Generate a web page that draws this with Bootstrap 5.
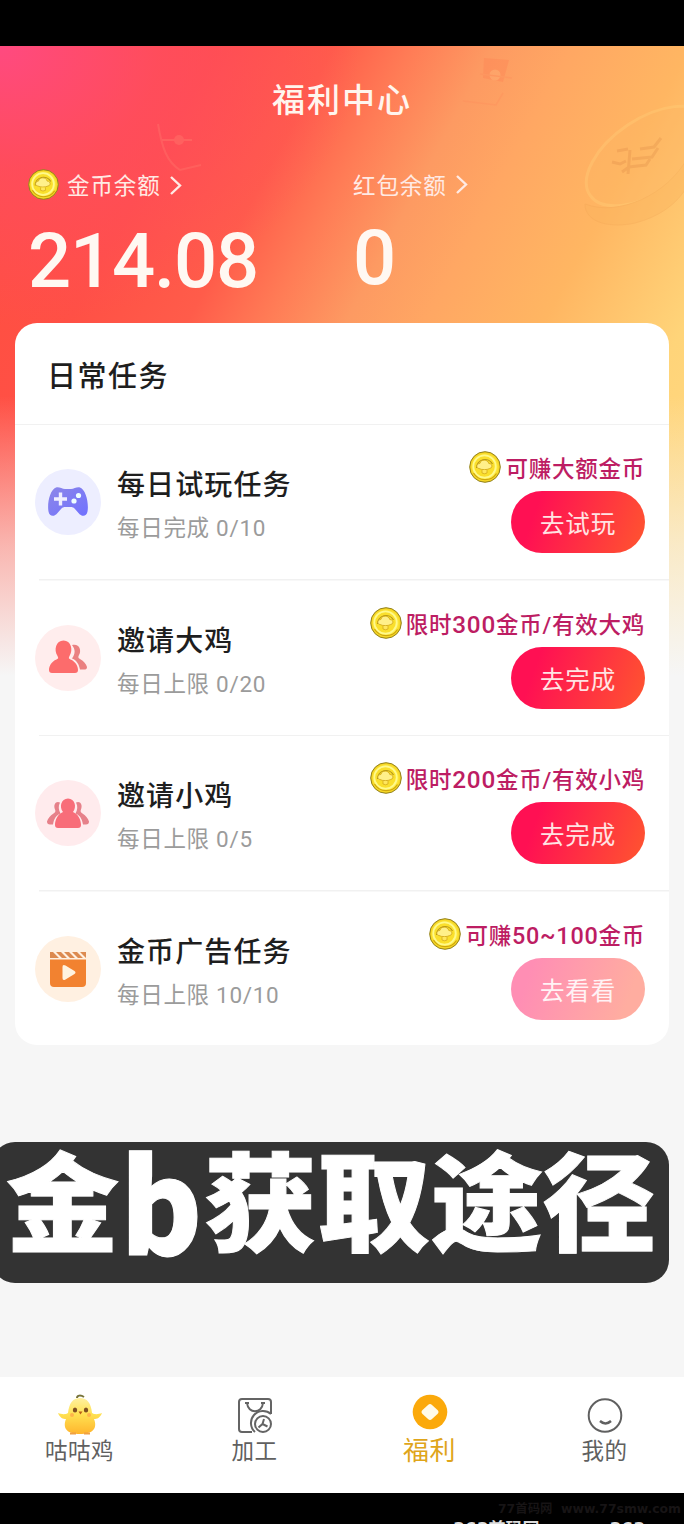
<!DOCTYPE html>
<html lang="zh-CN">
<head>
<meta charset="utf-8">
<meta name="viewport" content="width=device-width, initial-scale=1">
<title>福利中心</title>
<link href="https://cdn.jsdelivr.net/npm/bootstrap@5.3.0/dist/css/bootstrap.min.css" rel="stylesheet">
<style>
  body { font-family: Roboto, "Noto Sans CJK SC", sans-serif; background: #000; color: #1e1e1e; height: 1524px; overflow: hidden; }
  .status-strip { height: 46px; background: #000; }
  .screen { height: 1331px; background: linear-gradient(180deg, rgba(246,246,246,0) 350px, rgba(246,246,246,.6) 500px, #f6f6f6 630px), radial-gradient(ellipse 360px 280px at 0 0, #ff4a80, rgba(255,74,110,.55) 45%, rgba(255,76,80,0)), linear-gradient(118deg, #ff4e3e 0, #ff5045 190px, #ff5c4a 295px, #ff7c56 365px, #fd9a62 435px, #ffa763 505px, #ffb662 610px, #ffd479 735px, #ffdb87 912px) #f6f6f6; overflow: hidden; }
  .decor { left: 0; top: 0; pointer-events: none; }
  .page-title { height: 108px; font-size: 33px; letter-spacing: 2px; line-height: 110px; font-weight: 500; color: #fff5ee; }
  .balances { height: 169px; padding: 15px 0 0 28px; }
  .balance-label { height: 34px; line-height: 34px; font-size: 22.5px; letter-spacing: .9px; color: #ffeae4; }
  .balance-value { font-size: 76px; line-height: 80px; font-weight: 500; letter-spacing: -1.2px; color: #fff8f2; margin-top: 18px; }
  .balance-value.second { margin-top: 15px; }
  .first-balance { width: 325px; }
  .tasks { margin: 0 15px; border-radius: 22px; height: 722px; }
  .tasks-title { height: 102px; line-height: 108px; padding-left: 32px; font-size: 29px; letter-spacing: 1.5px; font-weight: 500; border-bottom: 1px solid #f1f1f1; }
  .task { height: 155.5px; padding: 0 24px 0 20px; }
  .task:not(:last-child) { background: linear-gradient(#f1f1f1, #f1f1f1) 24px 100% / 100% 1.5px no-repeat; }
  .task-icon { width: 66px; height: 66px; margin-top: 44px; }
  .task-text { margin: 40px 0 0 16px; }
  .task-name { font-size: 28px; letter-spacing: 1.1px; line-height: 42px; font-weight: 500; }
  .task-sub { font-size: 22.5px; letter-spacing: .7px; line-height: 30px; margin-top: 6px; color: #9b9b9b; }
  .task-side { padding-top: 25px; }
  .reward { height: 34px; line-height: 38px; font-size: 22.5px; letter-spacing: .75px; font-weight: 500; color: #bd1d63; white-space: nowrap; }
  .reward svg { margin-top: 1px; }
  .num { font-size: 24.3px; }
  .num.range { font-size: 23.4px; }
  .go-btn { width: 134px; height: 62px; border-radius: 31px; margin-top: 7px; font-size: 24.5px; letter-spacing: .8px; color: #ffe3e3; background: linear-gradient(110deg, #ff1053 20%, #ff5131 95%); line-height: 67px; padding: 0; border: 0; }
  .go-btn.done { background: linear-gradient(110deg, #ff8eb4 15%, #ffada0 85%); color: #fff3f5; }
  .caption-bar { margin: 97px 15px 0 -8px; height: 141px; border-radius: 23px; background: #333; color: #fff; padding-left: 14px; font: 900 113px/117px "Noto Sans CJK SC", sans-serif; white-space: nowrap; -webkit-text-stroke: 1px #fff; }
  .caption-text { transform: scaleY(.94); transform-origin: 0 0; }
  .tall { display: inline-block; width: 85px; text-align: center; transform: translateY(12px) scale(1.1, 1.23); transform-origin: 50% 86%; }
  .tabs-wrap { height: 116px; background: #fff; overflow: hidden; }
  .tabs { width: 700px; margin-left: -8px; font-size: 22.5px; color: #606060; }
  .tab { flex: 1 1 0; width: 0; padding-top: 16px; }
  .tab-label { line-height: 26px; margin-top: 3px; letter-spacing: .5px; }
  .tab.current { color: #dfa51b; font-size: 26px; }
  .footer-strip { height: 31px; background: #000; overflow: hidden; }
  .mark-line { height: 29px; padding-left: 498px; font: 600 12.4px/32px "DejaVu Sans", "Noto Sans CJK SC", sans-serif; color: #171415; white-space: nowrap; }
  .cut-line { font: 700 17px/26px "DejaVu Sans", "Noto Sans CJK SC", sans-serif; color: #ddd; padding-left: 453px; margin-top: -6px; gap: 70px; }
</style>
</head>
<body>
<svg width="0" height="0" class="position-absolute">
  <defs>
    <radialGradient id="gold"><stop offset="0" stop-color="#f5d93a"/><stop offset=".6" stop-color="#f4d51d"/><stop offset=".72" stop-color="#fff04b"/><stop offset="1" stop-color="#f3cc12"/></radialGradient>
    <linearGradient id="violet" x1="0" x2="1" y2="1"><stop stop-color="#8d87e8"/><stop offset="1" stop-color="#7071ff"/></linearGradient>
    <linearGradient id="chick" x2="0" y2="1"><stop stop-color="#fff0a0"/><stop offset=".45" stop-color="#ffe151"/><stop offset="1" stop-color="#ffb52d"/></linearGradient>
    <symbol id="coin" viewBox="0 0 32 32">
      <circle cx="16" cy="16" r="15.3" fill="url(#gold)" stroke="#91811f" stroke-width="1"/>
      <circle cx="15.500" cy="15.500" r="11.200" fill="#fadf2c" stroke="#fff98c" stroke-width="1.800"/>
      <path d="M7.500 17a8.500 8.500 0 0 1 16-4" fill="none" stroke="#b3941a" stroke-width="1.200"/>
      <path d="M10 17.500c-3.500-.5-2.500-5 .8-5 1-4.500 8-4.500 9 0 3.800 0 4 4.500 1 5-3 1.500-8 1.500-10.800 0z" fill="#fff08a" stroke="#cfa417" stroke-width=".8"/>
      <path d="M13 19v3q2.500 1.500 5 0v-3" fill="#ffe75c" stroke="#cfa417" stroke-width=".7"/>
      <path d="M4.500 22a13.500 13.500 0 0 0 23 .5" fill="none" stroke="#cfa60c" stroke-width="1.200"/>
    </symbol>
  </defs>
</svg>

<div class="status-strip"></div>
<main class="screen position-relative">
  <svg class="decor position-absolute" width="684" height="280" viewBox="0 46 684 280" fill="none">
    <g opacity=".32">
      <ellipse cx="648" cy="156" rx="70" ry="37" transform="rotate(-34 648 156)" fill="#fdb765" stroke="#ffd37c" stroke-width="3"/>
      <path d="M585 204c0 20 28 24 50 19 23-6 42-18 53-38v-28c-20 38-70 60-103 47z" fill="#f9b25c" stroke="#f1a352"/>
      <path d="M617 151l11-2M640 149l14-2 7-9M612 162l8 2 6-3M632 159l20-2 6-9M622 172l7-5 17-2 4-6M630 150l-2 24" stroke="#e08c48" stroke-width="3"/>
    </g>
    <g opacity=".3">
      <path d="M484 58l25 2-6 22-20-4z" fill="#ff7d50"/><circle cx="495" cy="75" r="5.500" fill="#ffb57c"/><path d="M480 74l32 4M463 101l33 4 7-12" stroke="#ff8b5b" stroke-width="1.500"/>
      <path d="M158 124c4 24 9 38 22 46l21-5" stroke="#ff8273" stroke-width="2"/><path d="M162 140h30" stroke="#ff8c76" stroke-width="2"/><circle cx="179" cy="140" r="5" fill="#ff8c76"/>
    </g>
  </svg>
  <h1 class="page-title text-center m-0 position-relative">福利中心</h1>
  <section class="balances d-flex position-relative">
    <div class="first-balance">
      <div class="balance-label d-flex"><svg width="31" height="31" class="me-2"><use href="#coin"/></svg>金币余额<svg class="ms-2" width="14" height="34" fill="none" stroke="#ffeae4" stroke-width="2.400"><path d="M2 8l9 8.500-9 8.500"/></svg></div>
      <div class="balance-value">214.08</div>
    </div>
    <div>
      <div class="balance-label d-flex">红包余额<svg class="ms-2" width="14" height="34" fill="none" stroke="#ffeae4" stroke-width="2.400"><path d="M2 7l9 8.500-9 8.500"/></svg></div>
      <div class="balance-value second">0</div>
    </div>
  </section>

  <section class="tasks bg-white overflow-hidden position-relative">
    <h2 class="tasks-title m-0">日常任务</h2>
    <div class="task d-flex align-items-start">
      <svg class="task-icon" viewBox="0 0 66 66"><circle cx="33" cy="33" r="33" fill="#edeeff"/><path d="M21 18.500c3-1 6 1.500 9 1.500h6c3 0 6-2.500 9-1.500 6 2 9 16 7.500 24-1 5.500-6 5.500-9 1.500l-4-4.500c-1-1-2-1.500-4-1.500h-5c-2 0-3 .5-4 1.500L22.500 44c-3 4-8 4-9-1.500-1.500-8 1.500-22 7.500-24z" fill="url(#violet)"/><path d="M25.500 23.500v13M19 30h13" stroke="#f0efff" stroke-width="3.400"/><circle cx="43.500" cy="26.500" r="2.600" fill="#eff"/><circle cx="39" cy="32" r="2.600" fill="#eff"/></svg>
      <div class="task-text"><div class="task-name">每日试玩任务</div><div class="task-sub">每日完成 0/10</div></div>
      <div class="task-side ms-auto d-flex flex-column align-items-end">
        <div class="reward d-flex"><svg class="me-1" width="32" height="32"><use href="#coin"/></svg>可赚大额金币</div>
        <button class="go-btn btn">去试玩</button>
      </div>
    </div>
    <div class="task d-flex align-items-start">
      <svg class="task-icon" viewBox="0 0 66 66"><circle cx="33" cy="33" r="33" fill="#ffeded"/><path d="M37 20c7-2 10 5 7 10-1 2-1 3 1 4 4 2 6 5 7 8 0 2-1 2.500-3 2.500h-4c-1-5-3-9-8-11 3.500-5 3.500-9 0-13.500z" fill="#ea8080"/><path d="M22.500 31c-4-6-1.500-15.500 6-15.500s10 9.500 6 15.500c-1 2-1 2.500 1 3.500 5 2 7.500 6.500 7.500 10.500 0 2-1 3-3 3H17c-2 0-3-1-3-3 0-4 2.500-8.500 7.500-10.500 2-1 2-1.500 1-3.500z" fill="#fc6c6c"/></svg>
      <div class="task-text"><div class="task-name">邀请大鸡</div><div class="task-sub">每日上限 0/20</div></div>
      <div class="task-side ms-auto d-flex flex-column align-items-end">
        <div class="reward d-flex"><svg class="me-1" width="32" height="32"><use href="#coin"/></svg><span>限时<span class="num">300</span>金币/有效大鸡</span></div>
        <button class="go-btn btn">去完成</button>
      </div>
    </div>
    <div class="task d-flex align-items-start">
      <svg class="task-icon" viewBox="0 0 66 66"><circle cx="33" cy="33" r="33" fill="#ffebed"/><path d="M25 22.500c-4-2-7 2-5 7 1 2 0 3-1.500 4-3.500 2-5.500 5-6.500 8 0 2 1 3 3 3h3c1-6 3-9 7.500-11-2-4-2.500-7-.5-11zM41 22.500c4-2 7 2 5 7-1 2 0 3 1.500 4 3.500 2 5.500 5 6.500 8 0 2-1 3-3 3h-3c-1-6-3-9-7.500-11 2-4 2.500-7 .5-11z" fill="#e6818a"/><path d="M28 32c-4-5-2-13.500 5-13.500S42 27 38 32c5 2 8 7.500 8 13 0 2-1 3-3 3H23c-2 0-3-1-3-3 0-5.500 3-11 8-13z" fill="#f86d79"/></svg>
      <div class="task-text"><div class="task-name">邀请小鸡</div><div class="task-sub">每日上限 0/5</div></div>
      <div class="task-side ms-auto d-flex flex-column align-items-end">
        <div class="reward d-flex"><svg class="me-1" width="32" height="32"><use href="#coin"/></svg><span>限时<span class="num">200</span>金币/有效小鸡</span></div>
        <button class="go-btn btn">去完成</button>
      </div>
    </div>
    <div class="task d-flex align-items-start">
      <svg class="task-icon" viewBox="0 0 66 66"><circle cx="33" cy="33" r="33" fill="#fff0e1"/><path d="M15 23.500h36V47q0 4-4 4H19q-4 0-4-4z" fill="#f28230"/><path d="M15 16h3l6 6h-9zM21 16h5l6 6h-5zM29 16h5l6 6h-5zM37 16h5l6 6h-5zM45 16h6v6z" fill="#dc8a50"/><path d="M27.500 31q0-3 3-1.500l9 5.500q2 1.500 0 3l-9 5.500q-3 1.500-3-1.500z" fill="#fff3df"/></svg>
      <div class="task-text"><div class="task-name">金币广告任务</div><div class="task-sub">每日上限 10/10</div></div>
      <div class="task-side ms-auto d-flex flex-column align-items-end">
        <div class="reward d-flex"><svg class="me-1" width="32" height="32"><use href="#coin"/></svg><span>可赚<span class="num range">50~100</span>金币</span></div>
        <button class="go-btn done btn">去看看</button>
      </div>
    </div>
  </section>

  <div class="caption-bar"><div class="caption-text">金<span class="tall">b</span>获取途径</div></div>
</main>

<div class="tabs-wrap">
<nav class="tabs d-flex text-center">
  <div class="tab d-flex flex-column align-items-center">
    <svg width="46" height="42" viewBox="0 0 46 42"><path d="M20 5c0-3 4-3 7-1" stroke="#77733a" stroke-width="2" fill="none"/><path d="M11 20c-3 2-7 1-10 0 2 5 5 6 8 6-4 10 2 15 14 15s18-5 14-15c3 0 6-1 8-6-3 1-7 2-10 0C34 10 30 5 23 5s-11 5-12 15z" fill="url(#chick)"/><ellipse cx="18" cy="17" rx="2.200" ry="2.600" fill="#7f4f22"/><ellipse cx="29" cy="17" rx="2.200" ry="2.600" fill="#7f4f22"/><path d="M21.500 18.500h4l-2 3z" fill="#bb5c14"/><circle cx="15" cy="22" r="2" fill="#ffb44b"/><circle cx="32" cy="22" r="2" fill="#ffb44b"/><path d="M13 40.500h6M27 40.500h6" stroke="#f0a043" stroke-width="2"/></svg>
    <div class="tab-label">咕咕鸡</div>
  </div>
  <div class="tab d-flex flex-column align-items-center">
    <svg width="38" height="42" viewBox="0 0 38 42" fill="none" stroke="#646464" stroke-width="2"><path d="M16 39H6q-3 0-3-3V9q0-3 3-3h26q3 0 3 3v12"/><path d="M11 10c1 11 15 11 16 0M9 10h4M25 10h4"/><path d="M19 39a11.500 11.500 0 0 1 16-18"/><circle cx="27" cy="31" r="8"/><path d="M22.500 34.500l4-3.500 5 2.500M26.500 31l1.500-5"/></svg>
    <div class="tab-label">加工</div>
  </div>
  <div class="tab current d-flex flex-column align-items-center">
    <svg width="40" height="42" viewBox="0 0 40 42"><circle cx="20" cy="19" r="17.300" fill="#fba90b"/><path d="M18 12q2-1.800 4 0l5.500 5q2 2 0 4l-5.500 5q-2 1.800-4 0l-5.500-5q-2-2 0-4z" fill="#fffbea"/></svg>
    <div class="tab-label">福利</div>
  </div>
  <div class="tab d-flex flex-column align-items-center">
    <svg width="40" height="42" viewBox="0 0 40 42" fill="none" stroke="#606060" stroke-width="2"><circle cx="20" cy="22.500" r="16.300"/><path d="M15 28q5.500 5 11 0" stroke-width="2.400"/></svg>
    <div class="tab-label">我的</div>
  </div>
</nav>
</div>
<footer class="footer-strip">
  <div class="mark-line">77首码网 &nbsp;www.77smw.com</div>
  <div class="cut-line d-flex"><span>363首码网</span><span>363</span></div>
</footer>
<script src="https://cdn.jsdelivr.net/npm/bootstrap@5.3.0/dist/js/bootstrap.bundle.min.js"></script>
</body>
</html>
